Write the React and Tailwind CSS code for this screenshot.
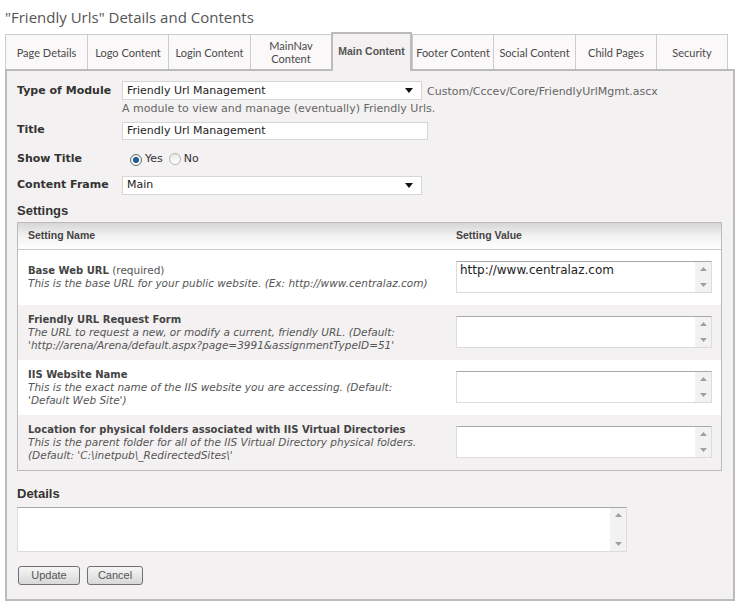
import React from 'react';

const tabs = [
    { label: 'Page Details', w: 'w-[82px]' },
    { label: 'Logo Content', w: 'w-[81px]' },
    { label: 'Login Content', w: 'w-[82px]' },
    { label: 'MainNav Content', w: 'w-[81px]', twoLine: true },
    { label: 'Main Content', w: 'w-[81px]', active: true },
    { label: 'Footer Content', w: 'w-[81px]' },
    { label: 'Social Content', w: 'w-[82px]' },
    { label: 'Child Pages', w: 'w-[81px]' },
    { label: 'Security', w: 'w-[72px]', last: true },
];

const settings = [
    {
        name: 'Base Web URL',
        extra: ' (required)',
        desc: ['This is the base URL for your public website. (Ex: http://www.centralaz.com)'],
        value: 'http://www.centralaz.com',
        bg: 'bg-white',
    },
    {
        name: 'Friendly URL Request Form',
        desc: [
            'The URL to request a new, or modify a current, friendly URL. (Default:',
            "'http://arena/Arena/default.aspx?page=3991&assignmentTypeID=51'",
        ],
        value: '',
        bg: 'bg-[#f3f1f1]',
    },
    {
        name: 'IIS Website Name',
        desc: [
            'This is the exact name of the IIS website you are accessing. (Default:',
            "'Default Web Site')",
        ],
        value: '',
        bg: 'bg-white',
    },
    {
        name: 'Location for physical folders associated with IIS Virtual Directories',
        desc: [
            'This is the parent folder for all of the IIS Virtual Directory physical folders.',
            "(Default: 'C:\\inetpub\\_RedirectedSites\\'",
        ],
        value: '',
        bg: 'bg-[#f3f1f1]',
    },
];

function Arrow() {
    return (
        <svg width="8" height="5" viewBox="0 0 8 5"><path d="M0 0h8L4 5z" fill="#111" /></svg>
    );
}

function FakeSelect({ value, w }) {
    return (
        <div className={`${w} h-[19px] bg-white border border-[#d6d6d6] flex items-center pl-[4px] pr-[8px]`}>
            <span className="flex-1 text-[11px] text-[#222]">{value}</span>
            <Arrow />
        </div>
    );
}

// textarea look-alike with the classic up/down scroll arrows
function FakeTextArea({ value, w, h }) {
    return (
        <div className={`${w} ${h} bg-white border border-[#dcdcdc] border-t-[#a9a9a9] flex`}>
            <div className="flex-1 text-[12px] text-[#222] pl-[3px] pt-[1px] leading-[15px]">{value}</div>
            <div className="w-[16px] bg-[#f2f2f2] flex flex-col justify-between items-center py-[5px]">
                <svg width="7" height="4" viewBox="0 0 7 4"><path d="M0 4h7L3.5 0z" fill="#a0a0a0" /></svg>
                <svg width="7" height="4" viewBox="0 0 7 4"><path d="M0 0h7L3.5 4z" fill="#a0a0a0" /></svg>
            </div>
        </div>
    );
}

function Radio({ checked }) {
    return (
        <span className={`inline-flex items-center justify-center w-[12px] h-[12px] rounded-full border ${checked ? 'border-[#6b6b6b]' : 'border-[#b5b5b5]'} bg-gradient-to-b from-[#e8e8e8] to-white`}>
            {checked && <span className="w-[6px] h-[6px] rounded-full bg-[#1a5f9a]" />}
        </span>
    );
}

function Button({ children, w }) {
    return (
        <button className={`${w} h-[19px] rounded-[3px] border border-[#707070] bg-gradient-to-b from-[#f6f6f6] to-[#d8d8d8] text-[11px] text-[#555] font-['Liberation_Sans'] leading-none`}>
            {children}
        </button>
    );
}

export default function App() {
    return (
        <div className="w-[741px] h-[612px] bg-white font-['DejaVu_Sans',sans-serif] text-[#333]">
            {/* PAGE TITLE */}
            <h1 className="pl-[5px] pt-[6px] h-[32px] text-[15px] text-[#555] font-['Open_Sans',sans-serif] leading-[22px]">
                "Friendly Urls" Details and Contents
            </h1>

            {/* TABS */}
            <div className="flex items-end pl-[5px] h-[37px]">
                {tabs.map((t) =>
                    t.active ? (
                        <div
                            key={t.label}
                            className={`${t.w} h-[39px] -mb-[2px] relative z-10 border-2 border-b-0 border-[#bbb] bg-[#f3f1f1] flex items-center justify-center text-[10.5px] font-bold text-[#555] font-['Liberation_Sans',sans-serif] pb-[2px]`}
                        >
                            {t.label}
                        </div>
                    ) : (
                        <div
                            key={t.label}
                            className={`${t.w} h-[35px] border-l border-t border-[#ccc] ${t.last ? 'border-r' : ''} bg-[#faf8f8] flex items-center justify-center text-center text-[11px] leading-[13px] text-[#4a4a4a] font-['Lato',sans-serif] px-[2px]`}
                        >
                            {t.twoLine ? (
                                <span>MainNav<br />Content</span>
                            ) : (
                                t.label
                            )}
                        </div>
                    )
                )}
            </div>

            {/* PANEL */}
            <div className="ml-[5px] w-[730px] h-[532px] border-2 border-[#bbb] bg-[#f3f1f1] pl-[10px] pt-[10px]">
                <div className="flex items-center">
                    <div className="w-[105px] text-[11px] font-bold">Type of Module</div>
                    <FakeSelect value="Friendly Url Management" w="w-[300px]" />
                    <span className="ml-[5px] mt-[3px] text-[11px] text-[#666]">Custom/Cccev/Core/FriendlyUrlMgmt.ascx</span>
                </div>
                <div className="ml-[105px] h-[16px] text-[11px] text-[#666] leading-[16px]">
                    A module to view and manage (eventually) Friendly Urls.
                </div>

                <div className="flex items-center mt-[5px]">
                    <div className="w-[105px] text-[11px] font-bold">Title</div>
                    <div className="w-[306px] h-[18px] bg-white border border-[#d6d6d6] text-[11px] text-[#222] pl-[4px] leading-[16px]">
                        Friendly Url Management
                    </div>
                </div>

                <div className="flex items-center h-[20px] mt-[10px]">
                    <div className="w-[113px] text-[11px] font-bold">Show Title</div>
                    <Radio checked />
                    <span className="ml-[3px] text-[11px]">Yes</span>
                    <span className="ml-[6px]"><Radio /></span>
                    <span className="ml-[3px] text-[11px]">No</span>
                </div>

                <div className="flex items-center mt-[6px]">
                    <div className="w-[105px] text-[11px] font-bold">Content Frame</div>
                    <FakeSelect value="Main" w="w-[300px]" />
                </div>

                <div className="mt-[8px] text-[13px] font-bold font-['Liberation_Sans'] text-[#333] leading-[16px]">Settings</div>

                {/* SETTINGS TABLE */}
                <div className="mt-[3px] w-[705px] border border-[#bbb]">
                    <div className="flex h-[27px] items-center border-b border-[#c8c8c8] bg-gradient-to-b from-[#d6d6d6] via-[#f2f2f2] to-white text-[10.5px] font-bold text-[#444] font-['Liberation_Sans',sans-serif]">
                        <div className="w-[428px] pl-[10px]">Setting Name</div>
                        <div className="pl-[10px]">Setting Value</div>
                    </div>
                    {settings.map((s) => (
                        <div key={s.name} className={`flex items-center h-[55px] ${s.bg}`}>
                            <div className="w-[428px] pl-[10px] text-[10.5px] leading-[13px]">
                                <div className="text-[#444]">
                                    <span className="font-bold text-[10px]">{s.name}</span>
                                    {s.extra && <span className="text-[#555]">{s.extra}</span>}
                                </div>
                                {s.desc.map((d) => (
                                    <div key={d} className="italic text-[#555] whitespace-nowrap">{d}</div>
                                ))}
                            </div>
                            <div className="pl-[10px]">
                                <FakeTextArea value={s.value} w="w-[256px]" h="h-[32px]" />
                            </div>
                        </div>
                    ))}
                </div>

                <div className="mt-[15px] text-[13px] font-bold font-['Liberation_Sans'] text-[#333] leading-[16px]">Details</div>
                <div className="mt-[5px]">
                    <FakeTextArea value="" w="w-[610px]" h="h-[45px]" />
                </div>

                <div className="flex gap-[7px] mt-[14px] ml-[1px]">
                    <Button w="w-[62px]">Update</Button>
                    <Button w="w-[56px]">Cancel</Button>
                </div>
            </div>
        </div>
    );
}
